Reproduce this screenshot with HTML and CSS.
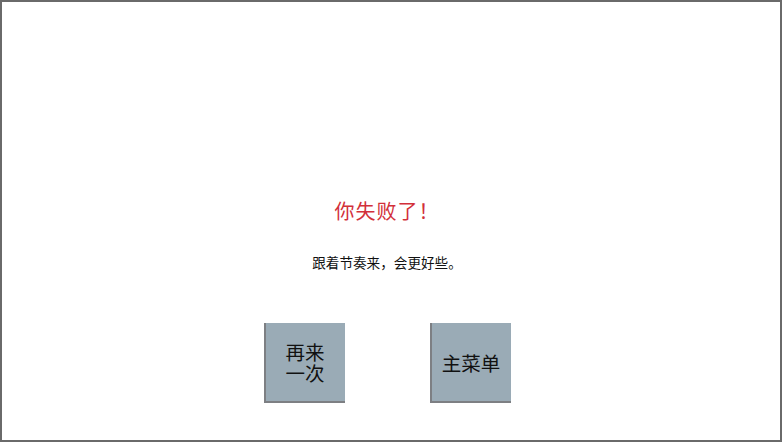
FILE: index.html
```html
<!DOCTYPE html>
<html lang="zh">
<head>
<meta charset="utf-8">
<title>你失败了</title>
<link rel="stylesheet" href="styles.css">
</head>
<body>
<div class="frame">
  <h1 class="title">你失败了！</h1>
  <p class="subtitle">跟着节奏来，会更好些。</p>
  <div class="actions">
    <button class="btn">再来<br>一次</button>
    <button class="btn">主菜单</button>
  </div>
</div>
</body>
</html>
```
FILE: styles.css
```css
html, body {
  margin: 0;
  padding: 0;
}
body {
  width: 782px;
  height: 442px;
  overflow: hidden;
  background: #ffffff;
  font-family: "Noto Sans CJK SC", "Liberation Sans", sans-serif;
}
.frame {
  box-sizing: border-box;
  width: 782px;
  height: 442px;
  border: 2px solid #6a6a6a;
  display: flex;
  flex-direction: column;
  align-items: center;
  padding: 196px 8px 0 0;
}
.title {
  margin: 0;
  font-size: 20px;
  line-height: 26px;
  font-weight: normal;
  letter-spacing: 1px;
  color: #d2303a;
}
.subtitle {
  margin: 29px 0 0 0;
  font-size: 13.6px;
  line-height: 18px;
  color: #111111;
}
.actions {
  margin-top: 52px;
  display: flex;
  gap: 85px;
}
.btn {
  box-sizing: border-box;
  width: 81px;
  height: 80px;
  margin: 0;
  padding: 0;
  background: #9aabb6;
  border: none;
  border-left: 2px solid #7d7f83;
  border-bottom: 2px solid #7d7f83;
  font-family: "Noto Sans CJK SC", "Liberation Sans", sans-serif;
  font-size: 19.5px;
  line-height: 21px;
  color: #111111;
}
```
